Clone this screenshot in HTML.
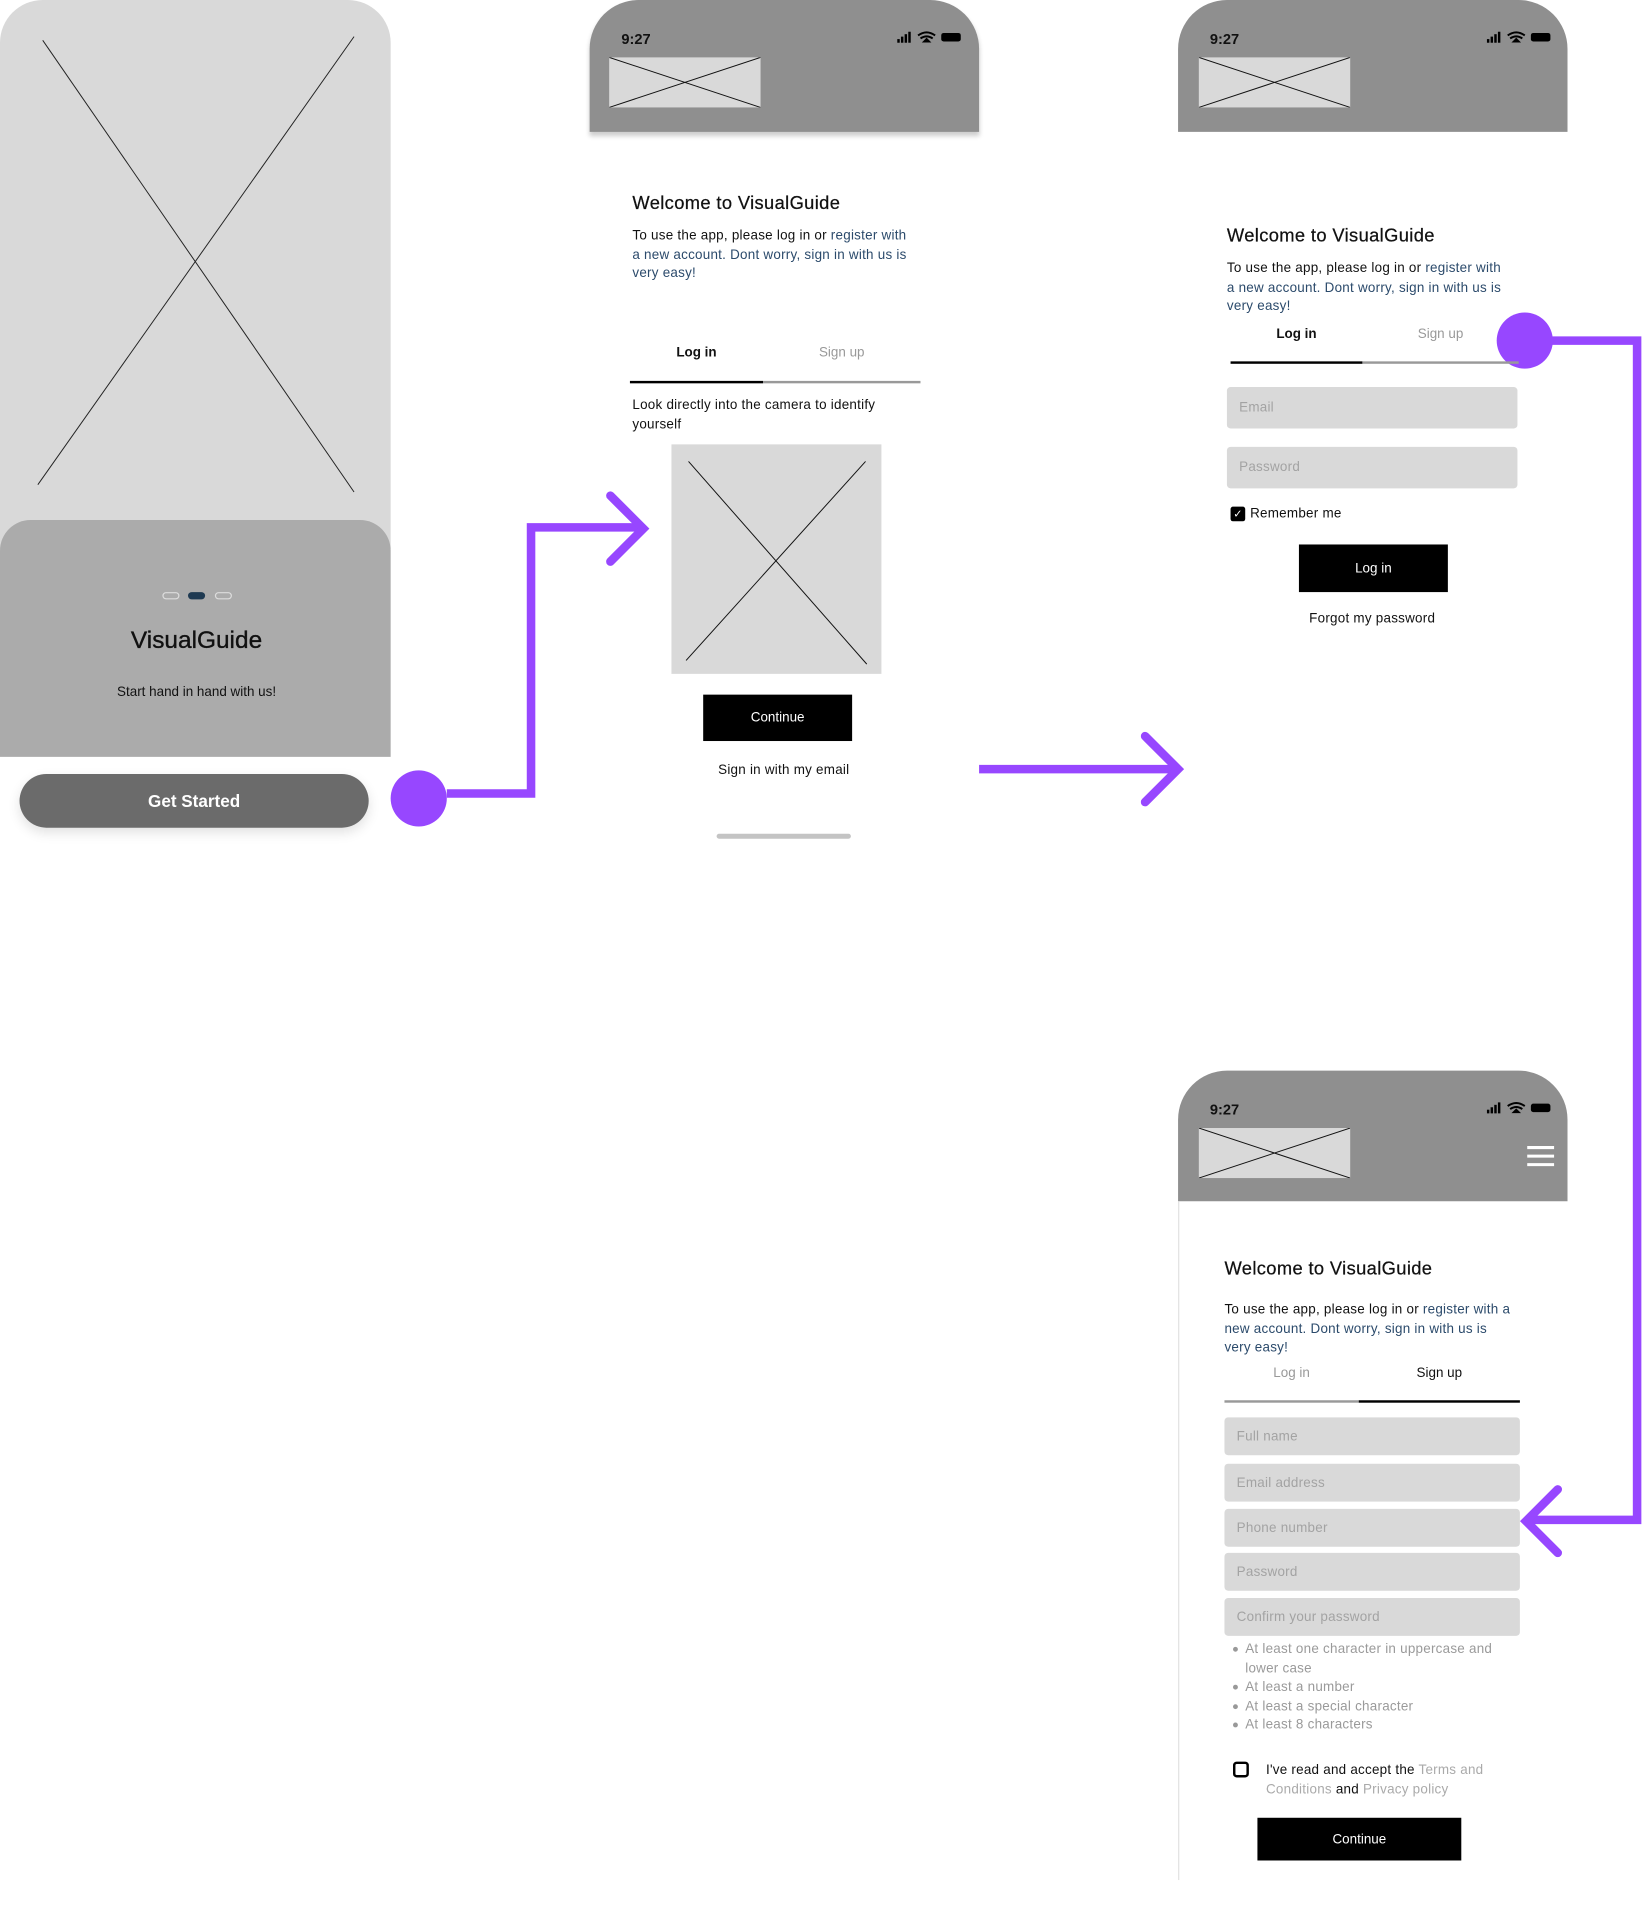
<!DOCTYPE html>
<html><head><meta charset="utf-8"><style>
html,body{margin:0;padding:0;background:#fff;width:1642px;height:1914px;overflow:hidden}
#w{position:absolute;left:0;top:0;width:1345px;height:1568px;transform:scale(1.2208);transform-origin:0 0;font-family:"Liberation Sans",sans-serif;color:#111}
.a{position:absolute;white-space:nowrap}
.hdr{position:absolute;background:#8f8f8f;border-radius:40px 40px 0 0}
.t{position:absolute;font-weight:bold;font-size:12px}
.ph{position:absolute;background:#d9d9d9}
.in{position:absolute;background:#d9d9d9;border-radius:3px;color:#a3a3a3;font-size:11px;box-sizing:border-box;padding-left:10px;display:flex;align-items:center;letter-spacing:.2px}
.btn{position:absolute;background:#000;color:#fff;font-size:11px;display:flex;align-items:center;justify-content:center}
.nv{color:#2b4a6b}
.p{font-size:11px;line-height:15.5px;letter-spacing:.2px}
.h{font-size:15px;letter-spacing:.3px;-webkit-text-stroke:.2px #111}
</style></head><body><div id="w">

<!-- phone 1 -->
<div class="ph" style="left:0;top:0;width:320px;height:450px;border-radius:35px 35px 0 0"></div>
<svg class="a" style="left:0;top:0" width="320" height="450"><line x1="35" y1="33" x2="290" y2="403" stroke="#222" stroke-width="0.8"/><line x1="290" y1="30" x2="31" y2="397" stroke="#222" stroke-width="0.8"/></svg>
<div class="a" style="left:0;top:426px;width:320px;height:194px;background:#ababab;border-radius:25px 25px 0 0"></div>
<div class="a" style="left:133px;top:485px;width:12px;height:4px;border:1px solid #ddd;border-radius:3px"></div>
<div class="a" style="left:154px;top:485px;width:14px;height:6px;background:#1f3a52;border-radius:3px"></div>
<div class="a" style="left:176px;top:485px;width:12px;height:4px;border:1px solid #ddd;border-radius:3px"></div>
<div class="a" style="left:0;width:322px;text-align:center;top:514px;font-size:20px;-webkit-text-stroke:.3px #111">VisualGuide</div>
<div class="a" style="left:0;width:322px;text-align:center;top:561px;font-size:11px">Start hand in hand with us!</div>
<div class="a" style="left:16px;top:634px;width:286px;height:44px;background:#6b6b6b;border-radius:22px;color:#fff;font-weight:bold;font-size:14px;display:flex;align-items:center;justify-content:center;box-shadow:0 4px 10px rgba(0,0,0,.12)">Get Started</div>

<!-- arrows -->
<svg class="a" style="left:0;top:0" width="1345" height="1568" fill="none">
<circle cx="343" cy="654" r="23" fill="#9747ff"/>
<polyline points="366,650 435,650 435,432 526,432" stroke="#9747ff" stroke-width="7"/>
<polyline points="500,406 527,433 500,460" stroke="#9747ff" stroke-width="7" stroke-linecap="round"/>
<line x1="802" y1="630" x2="964" y2="630" stroke="#9747ff" stroke-width="7"/>
<polyline points="938,603 965,630 938,657" stroke="#9747ff" stroke-width="7" stroke-linecap="round"/>
<circle cx="1249" cy="279" r="23" fill="#9747ff"/>
<polyline points="1270,279 1341,279 1341,1245 1252,1245" stroke="#9747ff" stroke-width="7"/>
<polyline points="1276,1220 1250,1246 1276,1272" stroke="#9747ff" stroke-width="7" stroke-linecap="round"/>
</svg>

<!-- phone 2 -->
<div class="hdr" style="left:483px;top:0;width:319px;height:108px;box-shadow:0 3px 4px rgba(0,0,0,.2)"></div>
<div class="t" style="left:509px;top:25px">9:27</div>
<svg class="a" style="left:733px;top:25px" width="56" height="12"><rect x="2" y="7" width="2" height="3" fill="#000"/><rect x="5" y="5" width="2" height="5" fill="#000"/><rect x="8" y="3" width="2" height="7" fill="#000"/><rect x="11" y="1" width="2" height="9" fill="#000"/><path d="M19 4 Q26 -1 33 4 M21 6.5 Q26 3 31 6.5 M24 9 L26 7 L28 9Z" stroke="#000" stroke-width="1.6" fill="none"/><rect x="38" y="2" width="16" height="7" rx="2" fill="#000"/></svg>
<div class="ph" style="left:499px;top:47px;width:124px;height:41px"></div>
<svg class="a" style="left:499px;top:47px" width="124" height="41"><line x1="0" y1="0" x2="124" y2="41" stroke="#111" stroke-width="0.8"/><line x1="124" y1="0" x2="0" y2="41" stroke="#111" stroke-width="0.8"/></svg>
<div class="a h" style="left:518px;top:158px">Welcome to VisualGuide</div>
<div class="a p" style="left:518px;top:186px">To use the app, please log in or <span class="nv">register with<br>a new account. Dont worry, sign in with us is<br>very easy!</span></div>
<div class="a" style="left:516px;width:109px;text-align:center;top:283px;font-size:11px;font-weight:bold">Log in</div>
<div class="a" style="left:625px;width:129px;text-align:center;top:283px;font-size:11px;color:#999">Sign up</div>
<div class="a" style="left:516px;top:312px;width:109px;height:2px;background:#000"></div>
<div class="a" style="left:625px;top:312px;width:129px;height:2px;background:#999"></div>
<div class="a p" style="left:518px;top:325px">Look directly into the camera to identify<br>yourself</div>
<div class="ph" style="left:550px;top:364px;width:172px;height:188px"></div>
<svg class="a" style="left:550px;top:364px" width="172" height="188"><line x1="14" y1="14" x2="160" y2="180" stroke="#111" stroke-width="0.8"/><line x1="159" y1="14" x2="12" y2="177" stroke="#111" stroke-width="0.8"/></svg>
<div class="btn" style="left:576px;top:569px;width:122px;height:38px">Continue</div>
<div class="a" style="left:542px;width:200px;text-align:center;top:625px;font-size:11px;letter-spacing:.2px">Sign in with my email</div>
<div class="a" style="left:587px;top:683px;width:110px;height:4px;background:#c4c4c4;border-radius:2px"></div>

<!-- phone 3 -->
<div class="hdr" style="left:965px;top:0;width:319px;height:108px"></div>
<div class="t" style="left:991px;top:25px">9:27</div>
<svg class="a" style="left:1216px;top:25px" width="56" height="12"><rect x="2" y="7" width="2" height="3" fill="#000"/><rect x="5" y="5" width="2" height="5" fill="#000"/><rect x="8" y="3" width="2" height="7" fill="#000"/><rect x="11" y="1" width="2" height="9" fill="#000"/><path d="M19 4 Q26 -1 33 4 M21 6.5 Q26 3 31 6.5 M24 9 L26 7 L28 9Z" stroke="#000" stroke-width="1.6" fill="none"/><rect x="38" y="2" width="16" height="7" rx="2" fill="#000"/></svg>
<div class="ph" style="left:982px;top:47px;width:124px;height:41px"></div>
<svg class="a" style="left:982px;top:47px" width="124" height="41"><line x1="0" y1="0" x2="124" y2="41" stroke="#111" stroke-width="0.8"/><line x1="124" y1="0" x2="0" y2="41" stroke="#111" stroke-width="0.8"/></svg>
<div class="a h" style="left:1005px;top:185px">Welcome to VisualGuide</div>
<div class="a p" style="left:1005px;top:213px">To use the app, please log in or <span class="nv">register with<br>a new account. Dont worry, sign in with us is<br>very easy!</span></div>
<div class="a" style="left:1008px;width:108px;text-align:center;top:268px;font-size:11px;font-weight:bold">Log in</div>
<div class="a" style="left:1116px;width:128px;text-align:center;top:268px;font-size:11px;color:#999">Sign up</div>
<div class="a" style="left:1008px;top:296px;width:108px;height:2px;background:#000"></div>
<div class="a" style="left:1116px;top:296px;width:128px;height:2px;background:#999"></div>
<div class="in" style="left:1005px;top:317px;width:238px;height:34px">Email</div>
<div class="in" style="left:1005px;top:366px;width:238px;height:34px">Password</div>
<div class="a" style="left:1008px;top:415px;width:12px;height:12px;background:#000;border-radius:2px;color:#fff;font-size:9px;text-align:center;line-height:12px">✓</div>
<div class="a" style="left:1024px;top:415px;font-size:11px;letter-spacing:.2px">Remember me</div>
<div class="btn" style="left:1064px;top:446px;width:122px;height:39px">Log in</div>
<div class="a" style="left:1024px;width:200px;text-align:center;top:501px;font-size:11px;letter-spacing:.2px">Forgot my password</div>

<!-- phone 4 -->
<div class="hdr" style="left:965px;top:877px;width:319px;height:107px"></div>
<div class="a" style="left:965px;top:984px;width:1px;height:556px;background:#e2e2e2"></div>
<div class="t" style="left:991px;top:902px">9:27</div>
<svg class="a" style="left:1216px;top:902px" width="56" height="12"><rect x="2" y="7" width="2" height="3" fill="#000"/><rect x="5" y="5" width="2" height="5" fill="#000"/><rect x="8" y="3" width="2" height="7" fill="#000"/><rect x="11" y="1" width="2" height="9" fill="#000"/><path d="M19 4 Q26 -1 33 4 M21 6.5 Q26 3 31 6.5 M24 9 L26 7 L28 9Z" stroke="#000" stroke-width="1.6" fill="none"/><rect x="38" y="2" width="16" height="7" rx="2" fill="#000"/></svg>
<div class="ph" style="left:982px;top:924px;width:124px;height:41px"></div>
<svg class="a" style="left:982px;top:924px" width="124" height="41"><line x1="0" y1="0" x2="124" y2="41" stroke="#111" stroke-width="0.8"/><line x1="124" y1="0" x2="0" y2="41" stroke="#111" stroke-width="0.8"/></svg>
<svg class="a" style="left:1250px;top:937px" width="24" height="20"><path d="M1 3H23M1 10H23M1 17H23" stroke="#fff" stroke-width="2.5"/></svg>
<div class="a h" style="left:1003px;top:1031px">Welcome to VisualGuide</div>
<div class="a p" style="left:1003px;top:1066px">To use the app, please log in or <span class="nv">register with a<br>new account. Dont worry, sign in with us is<br>very easy!</span></div>
<div class="a" style="left:1003px;width:110px;text-align:center;top:1119px;font-size:11px;color:#999">Log in</div>
<div class="a" style="left:1113px;width:132px;text-align:center;top:1119px;font-size:11px">Sign up</div>
<div class="a" style="left:1003px;top:1147px;width:110px;height:2px;background:#999"></div>
<div class="a" style="left:1113px;top:1147px;width:132px;height:2px;background:#000"></div>
<div class="in" style="left:1003px;top:1161px;width:242px;height:31px">Full name</div>
<div class="in" style="left:1003px;top:1199px;width:242px;height:31px">Email address</div>
<div class="in" style="left:1003px;top:1236px;width:242px;height:31px">Phone number</div>
<div class="in" style="left:1003px;top:1272px;width:242px;height:31px">Password</div>
<div class="in" style="left:1003px;top:1309px;width:242px;height:31px">Confirm your password</div>
<div class="a p" style="left:1020px;top:1344px;color:#9a9a9a">At least one character in uppercase and<br>lower case<br>At least a number<br>At least a special character<br>At least 8 characters</div>
<div class="a" style="left:1010px;top:1349px;width:4px;height:4px;border-radius:2px;background:#999"></div>
<div class="a" style="left:1010px;top:1380px;width:4px;height:4px;border-radius:2px;background:#999"></div>
<div class="a" style="left:1010px;top:1396px;width:4px;height:4px;border-radius:2px;background:#999"></div>
<div class="a" style="left:1010px;top:1411px;width:4px;height:4px;border-radius:2px;background:#999"></div>
<div class="a" style="left:1010px;top:1443px;width:9px;height:9px;border:2px solid #000;border-radius:3px"></div>
<div class="a p" style="left:1037px;top:1443px">I've read and accept the <span style="color:#aaa">Terms and</span><br><span style="color:#aaa">Conditions</span> and <span style="color:#aaa">Privacy policy</span></div>
<div class="btn" style="left:1030px;top:1489px;width:167px;height:35px">Continue</div>
</div></body></html>
